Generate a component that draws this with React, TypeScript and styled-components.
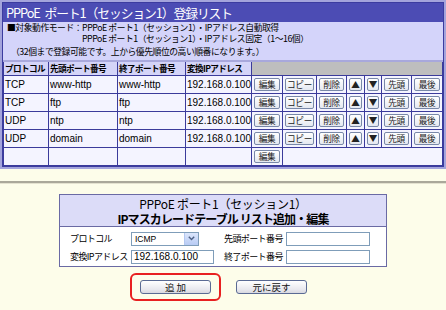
import styled, { createGlobalStyle } from 'styled-components';

const GlobalStyle = createGlobalStyle`
  html, body {
    margin: 0;
    padding: 0;
    background: #fdfdea;
  }
  body {
    font-family: "Noto Sans CJK JP", "Liberation Sans", sans-serif;
    color: #000;
  }
`;

const Page = styled.div`
  width: 446px;
  height: 310px;
  overflow: hidden;
  display: flex;
  flex-direction: column;
`;

const ListPanel = styled.div`
  border: 2px solid #a4a4dc;
  background: #d4d4fa;
  box-shadow: inset 0 0 0 1px #3c3ca0;
  padding: 1px;
`;

const TitleBar = styled.div`
  height: 19px;
  background: #4c4cb4;
  color: #fff;
  font-size: 12.8px;
  line-height: 19px;
  padding-left: 3px;
  white-space: nowrap;
  letter-spacing: -1.1px;
  word-spacing: 3px;
`;

const Info = styled.div`
  padding: 1px 4px 2px;
  font-size: 8.8px;
  white-space: nowrap;
  letter-spacing: -0.45px;
`;

const Line = styled.div<{ $indent?: number; $gap?: number }>`
  line-height: 10.5px;
  padding-left: ${(p) => p.$indent ?? 0}px;
  margin-top: ${(p) => p.$gap ?? 0}px;
`;

const ListTable = styled.table`
  width: 100%;
  border-collapse: collapse;
  table-layout: fixed;
  border-top: 2px solid #a8a8dc;

  td, th {
    border: 1px solid #3b3b9b;
    padding: 0 1px;
    white-space: nowrap;
    overflow: hidden;
  }
`;

const HeadCell = styled.th<{ $blank?: boolean }>`
  height: 13px;
  background: ${(p) =>
    p.$blank
      ? 'repeating-conic-gradient(#b4b4b4 0 25%, #c8c8c8 0 50%) 0 0 / 2px 2px'
      : '#d4d4f8'};
  font-weight: bold;
  font-size: 8.6px;
  line-height: 13px;
  text-align: left;
  letter-spacing: -0.6px;
`;

const Cell = styled.td<{ $btn?: boolean }>`
  height: 17px;
  background: #f4f4ff;
  font-family: "Liberation Sans", "Noto Sans CJK JP", sans-serif;
  font-size: 10px;
  line-height: 17px;
  text-align: ${(p) => (p.$btn ? 'center' : 'left')};
  && { padding: ${(p) => (p.$btn ? '0' : '0 1px')}; }
`;

const MiniButton = styled.button`
  height: 13px;
  width: calc(100% - 4px);
  padding: 0;
  border: 1px solid #7888a8;
  border-radius: 2px;
  background: linear-gradient(#ffffff, #e4e8f0);
  font-family: "Noto Sans CJK JP", sans-serif;
  font-size: 8.6px;
  line-height: 11px;
  letter-spacing: -0.3px;
  color: #222;
  vertical-align: middle;
`;

const Divider = styled.div`
  margin-top: 12px;
  height: 2px;
  background: #aaa89a;
  border-bottom: 1px solid #e4e2d0;
`;

const FormPanel = styled.div`
  margin: 10px 0 0 59px;
  width: 326px;
  border: 1px solid #6a6aa4;
  background: #fff;
`;

const FormHead = styled.div`
  background: #dcdcf8;
  border-bottom: 1px solid #6a6aa4;
  text-align: center;
  font-size: 12px;
  line-height: 15px;
  padding: 1px 0 0;
`;

const FormTitle = styled.div<{ $bold?: boolean }>`
  font-weight: ${(p) => (p.$bold ? 'bold' : 'normal')};
  letter-spacing: ${(p) => (p.$bold ? '-0.9px' : '-0.3px')};
`;

const FormBody = styled.div`
  display: grid;
  grid-template-columns: 61px 93px 62px 84px;
  grid-auto-rows: 14px;
  row-gap: 4px;
  padding: 5px 0 2px 10px;
  align-items: center;
`;

const Label = styled.span`
  font-size: 9px;
  white-space: nowrap;
  letter-spacing: -0.6px;
`;

const Select = styled.div`
  width: 68px;
  height: 14px;
  border: 1px solid #7f9db9;
  display: flex;
  align-items: center;
  justify-content: space-between;
  box-sizing: border-box;
  font-family: "Liberation Sans", sans-serif;
  font-size: 8.5px;
  padding-left: 3px;
`;

const SelectArrow = styled.span`
  width: 13px;
  height: 12px;
  background: linear-gradient(#dce6fc, #b8cbf4);
  border-left: 1px solid #b4c8f0;
  display: flex;
  align-items: center;
  justify-content: center;
`;

const TextInput = styled.div<{ $w: number }>`
  width: ${(p) => p.$w}px;
  height: 14px;
  border: 1px solid #7f9db9;
  box-sizing: border-box;
  font-family: "Liberation Sans", sans-serif;
  font-size: 10px;
  line-height: 12px;
  padding-left: 2px;
  background: #fff;
`;

const Actions = styled.div`
  display: flex;
  align-items: center;
  gap: 15px;
  margin: 6px 0 0 130px;
`;

const Highlight = styled.div`
  width: 91px;
  height: 28px;
  box-sizing: border-box;
  border: 2px solid #e82020;
  border-radius: 6px;
  display: flex;
  align-items: center;
  justify-content: center;
`;

const ActionButton = styled.button`
  width: 71px;
  height: 14px;
  padding: 0;
  border: 1px solid #5a6a94;
  border-radius: 3px;
  background: linear-gradient(#ffffff, #e8e8ee 70%, #d8d8e0);
  font-family: "Noto Sans CJK JP", sans-serif;
  font-size: 9.5px;
  line-height: 12px;
  color: #111;
`;

const rows = [
  { proto: 'TCP', start: 'www-http', end: 'www-http', ip: '192.168.0.100' },
  { proto: 'TCP', start: 'ftp', end: 'ftp', ip: '192.168.0.100' },
  { proto: 'UDP', start: 'ntp', end: 'ntp', ip: '192.168.0.100' },
  { proto: 'UDP', start: 'domain', end: 'domain', ip: '192.168.0.100' },
];

const actions = ['編集', 'コピー', '削除', '▲', '▼', '先頭', '最後'];
const colWidths = [45, 69, 68, 66, 31, 34, 30, 18, 17, 30, 31];

export default function App() {
  return (
    <Page>
      <GlobalStyle />
      <ListPanel>
        <TitleBar>PPPoE ポート1（セッション1）登録リスト</TitleBar>
        <Info>
          <Line>■対象動作モード：PPPoE ポート1（セッション1）・IPアドレス自動取得</Line>
          <Line $indent={75}>PPPoE ポート1（セッション1）・IPアドレス固定（1〜16個）</Line>
          <Line $indent={4} $gap={3}>（32個まで登録可能です。上から優先順位の高い順番になります。）</Line>
        </Info>
        <ListTable>
          <colgroup>
            {colWidths.map((w, i) => (
              <col key={i} style={{ width: w }} />
            ))}
          </colgroup>
          <thead>
            <tr>
              <HeadCell>プロトコル</HeadCell>
              <HeadCell>先頭ポート番号</HeadCell>
              <HeadCell>終了ポート番号</HeadCell>
              <HeadCell>変換IPアドレス</HeadCell>
              <HeadCell $blank colSpan={7} />
            </tr>
          </thead>
          <tbody>
            {rows.map((r, i) => (
              <tr key={i}>
                <Cell>{r.proto}</Cell>
                <Cell>{r.start}</Cell>
                <Cell>{r.end}</Cell>
                <Cell>{r.ip}</Cell>
                {actions.map((a) => (
                  <Cell $btn key={a}>
                    <MiniButton>{a}</MiniButton>
                  </Cell>
                ))}
              </tr>
            ))}
            <tr>
              <Cell />
              <Cell />
              <Cell />
              <Cell />
              <Cell $btn>
                <MiniButton>編集</MiniButton>
              </Cell>
              <Cell colSpan={6} />
            </tr>
          </tbody>
        </ListTable>
      </ListPanel>

      <Divider />

      <FormPanel>
        <FormHead>
          <FormTitle>PPPoE ポート1（セッション1）</FormTitle>
          <FormTitle $bold>IPマスカレードテーブル リスト追加・編集</FormTitle>
        </FormHead>
        <FormBody>
          <Label>プロトコル</Label>
          <Select>
            ICMP
            <SelectArrow>
              <svg width="7" height="5" viewBox="0 0 7 5">
                <path d="M0.8 0.8 L3.5 3.6 L6.2 0.8" fill="none" stroke="#4d6185" strokeWidth="1.4" />
              </svg>
            </SelectArrow>
          </Select>
          <Label>先頭ポート番号</Label>
          <TextInput $w={84} />
          <Label>変換IPアドレス</Label>
          <TextInput $w={83}>192.168.0.100</TextInput>
          <Label>終了ポート番号</Label>
          <TextInput $w={84} />
        </FormBody>
      </FormPanel>

      <Actions>
        <Highlight>
          <ActionButton>追 加</ActionButton>
        </Highlight>
        <ActionButton>元に戻す</ActionButton>
      </Actions>
    </Page>
  );
}
